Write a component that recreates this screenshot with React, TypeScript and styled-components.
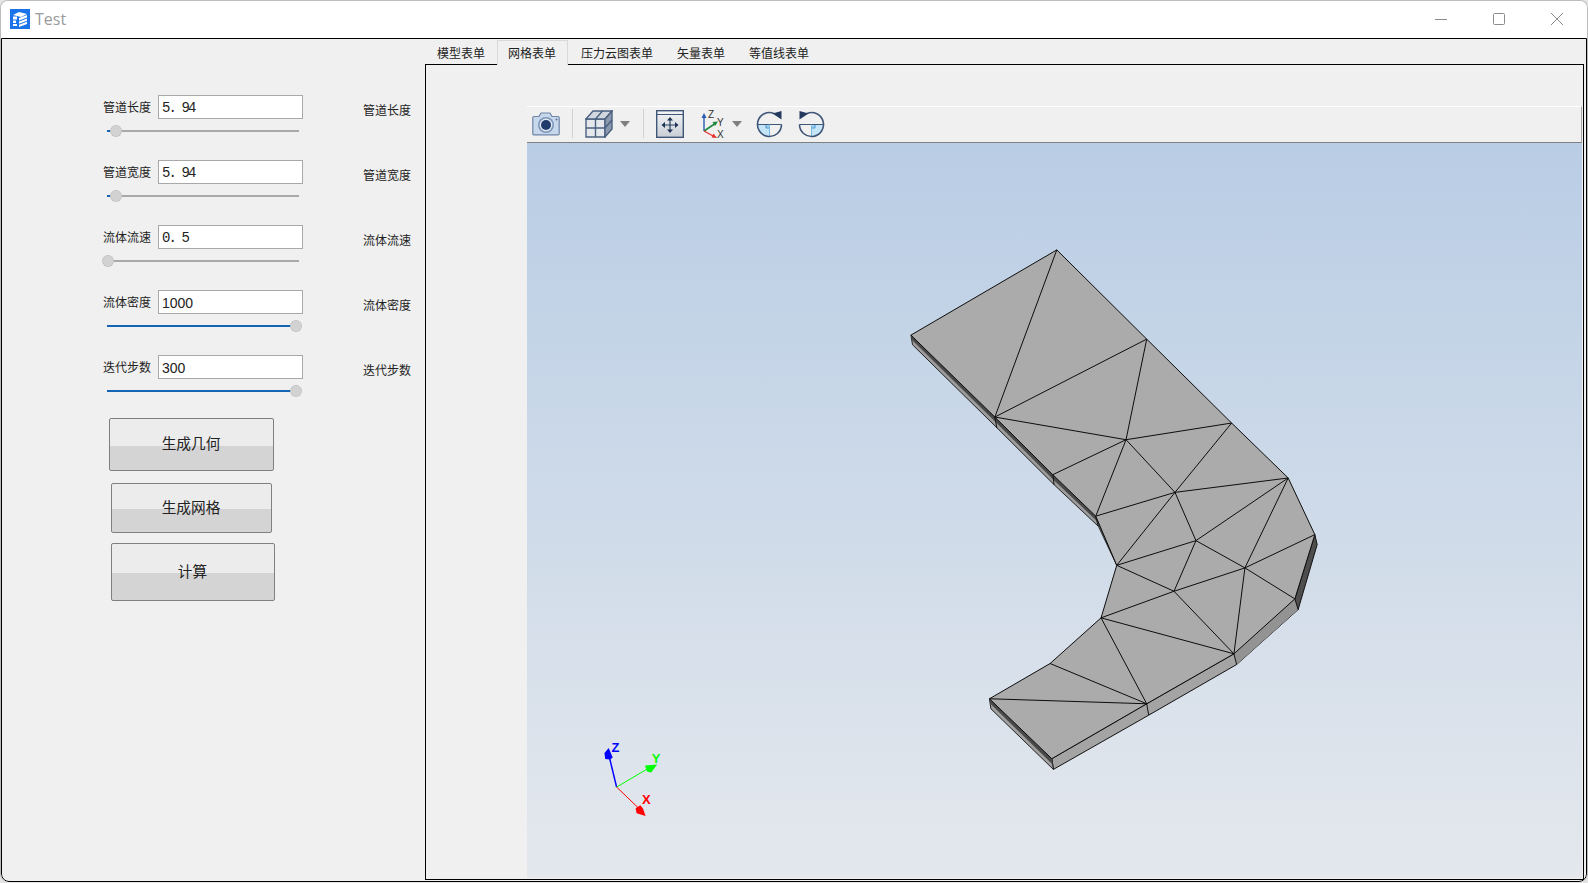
import React from 'react';
import styled, { createGlobalStyle } from 'styled-components';

const GlobalStyle = createGlobalStyle`
  html, body {
    margin: 0;
    height: 100%;
    background: #e4e4e4;
    overflow: hidden;
  }
  body {
    font-family: "Noto Sans CJK SC", "Liberation Sans", sans-serif;
  }
`;

const Frame = styled.div`
  box-sizing: border-box;
  width: 1588px;
  height: 882px;
  display: flex;
  flex-direction: column;
  background: #fff;
  border: 1px solid #bdbdbd;
  border-bottom: none;
  border-radius: 8px;
  overflow: hidden;
`;

const TitleBar = styled.header`
  flex: 0 0 37px;
  box-sizing: border-box;
  display: flex;
  align-items: center;
  padding: 0 0 2px 9px;
  background: #fff;
`;

const WindowTitle = styled.span`
  margin-left: 5px;
  font-family: "Open Sans", "Liberation Sans", sans-serif;
  font-size: 16px;
  color: #9b9b9b;
`;

const WindowControls = styled.div`
  margin-left: auto;
  display: flex;
  align-items: center;
`;

const ControlGlyph = styled.svg<{ $mr: number }>`
  display: block;
  width: 14px;
  height: 14px;
  margin-right: ${p => p.$mr}px;
  fill: none;
  stroke: #8c8c8c;
  stroke-width: 1;
`;

const Client = styled.div`
  flex: 1;
  min-height: 0;
  display: flex;
  background: #f0f0f0;
  border: 1px solid #000;
  border-radius: 0 0 8px 8px;
  padding: 0 1px 1px 0;
`;

const SidePanel = styled.aside`
  flex: 0 0 423px;
  display: flex;
  flex-direction: column;
  gap: 23px;
  padding-top: 56px;
  box-sizing: border-box;
`;

const ParamRow = styled.div`
  display: grid;
  grid-template-columns: 48px 145px 48px;
  grid-template-rows: 24px 12px;
  column-gap: 7px;
  row-gap: 6px;
  padding-left: 101px;
  align-items: center;
`;

const ParamLabel = styled.label`
  font-size: 12px;
  line-height: 16px;
  color: #222;
  white-space: nowrap;
`;

const EchoLabel = styled(ParamLabel)`
  margin-left: 53px;
  margin-top: 6px;
`;

const ParamInput = styled.input<{ $mono?: boolean }>`
  box-sizing: border-box;
  width: 145px;
  height: 24px;
  padding: 2px 3px 0;
  background: #fff;
  border: 1px solid #a9a9a9;
  border-radius: 0;
  outline: none;
  color: #222;
  font-family: ${p => (p.$mono ? '"Liberation Mono", monospace' : '"Liberation Sans", sans-serif')};
  font-size: 14px;
  letter-spacing: ${p => (p.$mono ? '-1.9px' : '0')};
`;

const SliderTrack = styled.div`
  grid-column: 1 / 3;
  position: relative;
  margin-left: 4px;
  width: 192px;
  height: 2px;
  background: #a9a9a9;
`;

const SliderFill = styled.div`
  position: absolute;
  left: 0;
  top: 0;
  height: 2px;
  background: #1565b5;
`;

const SliderThumb = styled.div`
  position: absolute;
  top: -5px;
  box-sizing: border-box;
  width: 12px;
  height: 12px;
  margin-left: -6px;
  background: #d2d2d2;
  border: 1px dotted #b8b8b8;
  border-radius: 50%;
`;

const ActionButton = styled.button<{ $w: number; $h: number; $ml: number; $mt: number; $split: number }>`
  display: block;
  box-sizing: border-box;
  width: ${p => p.$w}px;
  height: ${p => p.$h}px;
  margin: ${p => p.$mt}px 0 0 ${p => p.$ml}px;
  padding: 0 1px 4px 0;
  border: 1px solid #808080;
  border-radius: 2px;
  background: linear-gradient(#ececec 0, #ececec ${p => p.$split}px, #d4d4d4 ${p => p.$split}px, #d4d4d4 100%);
  font-family: "Noto Sans CJK SC", sans-serif;
  font-size: 14.67px;
  color: #222;
`;

const ButtonGroup = styled.div`
  margin-top: -2px;
`;

const MainColumn = styled.section`
  flex: 1;
  min-width: 0;
  display: flex;
  flex-direction: column;
  padding-top: 1px;
`;

const TabBar = styled.nav`
  flex: 0 0 24px;
  height: 24px;
  min-height: 0;
  display: flex;
  align-items: flex-start;
  position: relative;
  z-index: 1;
`;

const Tab = styled.div<{ $active?: boolean }>`
  box-sizing: border-box;
  height: ${p => (p.$active ? '25px' : '24px')};
  padding: 0 12px;
  font-size: 12px;
  line-height: 25px;
  color: #222;
  white-space: nowrap;
  background: #f0f0f0;
  ${p =>
    p.$active &&
    `
    padding: 0 11px 0 10px;
    margin-right: 1px;
    border: 1px solid #d9d9d9;
    border-bottom: none;
    line-height: 24px;
  `}
`;

const TabPane = styled.div`
  flex: 1;
  min-height: 0;
  display: flex;
  flex-direction: column;
  box-sizing: border-box;
  border: 1px solid #000;
  margin-right: 1px;
  padding: 41px 1px 1px 101px;
`;

const Toolbar = styled.div`
  flex: none;
  display: flex;
  align-items: center;
  padding: 0 0 2px 5px;
  background: #f0f0f0;
  border-top: 1px solid #fff;
  border-right: 1px solid #a8a8a8;
  border-bottom: 1px solid #808080;
  height: 33px;
`;

const ToolGlyph = styled.svg<{ $ml?: number }>`
  display: block;
  flex: none;
  margin-left: ${p => p.$ml ?? 0}px;
`;

const ToolSeparator = styled.span<{ $ml: number }>`
  flex: none;
  width: 1px;
  height: 29px;
  margin-left: ${p => p.$ml}px;
  background: #d2d2d2;
`;

const DropCaret = styled.span`
  flex: none;
  width: 0;
  height: 0;
  margin-left: 7px;
  border-left: 5.5px solid transparent;
  border-right: 5.5px solid transparent;
  border-top: 6px solid #808080;
`;

const Viewport = styled.div`
  flex: 1;
  min-height: 0;
  background: linear-gradient(#b9cde5, #e4e8ed);
`;

const Scene = styled.svg`
  display: block;
  width: 100%;
  height: 100%;
`;

const AxisLabel = styled.text`
  font-family: "Liberation Sans", sans-serif;
  font-size: 13px;
  font-weight: 700;
`;

const AppLogo = () => (
  <svg width="20" height="20" viewBox="0 0 20 20">
    <rect width="20" height="20" fill="#1a73e8" />
    <path d="M3 6l6-3 8 2-6 3z" fill="#fff" />
    <path d="M3 7.5h4v3H3zM3 11.5h3v2.5H3zM3 15h4v2H3z" fill="#fff" />
    <path d="M9 9l8-3v2.4L9 11.4zM9 12.4l8-3v2.4l-8 3zM9 15.8l8-3V15l-8 3z" fill="#fff" />
  </svg>
);

const CameraIcon = () => (
  <ToolGlyph width="28" height="24" viewBox="0 0 28 24">
    <path
      d="M2 4.5h5l2-3.500h9l2 3.500h6a1.200 1.200 0 0 1 1.200 1.200v16a1.200 1.200 0 0 1-1.200 1.200H2a1.200 1.200 0 0 1-1.200-1.200v-16A1.200 1.200 0 0 1 2 4.500z"
      fill="#c7d8ec"
      stroke="#6e85a8"
      strokeWidth="1.2"
    />
    <circle cx="14" cy="13" r="8" fill="#7d95b8" />
    <circle cx="14" cy="13" r="6.400" fill="#dfe8f2" />
    <circle cx="14" cy="13" r="5" fill="#1f3a6b" />
    <circle cx="24.500" cy="7.500" r="1" fill="#5a7296" />
  </ToolGlyph>
);

const CubeIcon = () => (
  <ToolGlyph $ml={12} width="28" height="28" viewBox="0 0 28 28" fill="none" stroke="#4a607f" strokeWidth="1.4">
    <path d="M1 9h19v18H1z" fill="#e4e7ec" />
    <path d="M1 9l7-8h19l-7 8z" fill="#d2d7df" />
    <path d="M20 9l7-8v18l-7 8z" fill="#8b99af" />
    <path d="M10.5 9v18M1 18h19M10.5 9l7-8M20 18l7-8" />
  </ToolGlyph>
);

const FitIcon = () => (
  <ToolGlyph $ml={12} width="28" height="28" viewBox="0 0 28 28">
    <defs>
      <linearGradient id="fitBg" x1="0" y1="0" x2="0" y2="1">
        <stop offset="0" stopColor="#f3f4f6" />
        <stop offset="1" stopColor="#c9ced6" />
      </linearGradient>
    </defs>
    <rect x="0.7" y="0.7" width="26.6" height="26.6" fill="url(#fitBg)" stroke="#3f5678" strokeWidth="1.4" />
    <path d="M1 4.5h26" stroke="#3f5678" strokeWidth="1" />
    <path d="M14 8v14M7 15h14" stroke="#2a3f60" strokeWidth="1.2" />
    <path d="M14 7l-3 3.5h6zM14 23l-3-3.5h6zM5.5 15l3.5-3v6zM22.5 15L19 12v6z" fill="#1f3354" />
  </ToolGlyph>
);

const TriadIcon = () => (
  <ToolGlyph $ml={17} width="24" height="30" viewBox="0 0 24 30">
    <path d="M3 22V7" stroke="#2a5bb0" strokeWidth="1.4" />
    <path d="M3 4L0.5 9h5z" fill="#2a5bb0" />
    <path d="M3 22l12-8" stroke="#1e8a3c" strokeWidth="1.6" />
    <path d="M17 12.5l-5.5 0.5 2.5 4z" fill="#1e8a3c" />
    <path d="M3 22l11 6" stroke="#e53030" strokeWidth="1.4" />
    <path d="M16 29l-5.5-.5 2-4z" fill="#e53030" />
    <text x="7" y="9" fontSize="10" fontFamily="Liberation Sans, sans-serif" fill="#333">Z</text>
    <text x="16" y="17" fontSize="10" fontFamily="Liberation Sans, sans-serif" fill="#333">Y</text>
    <text x="16" y="29" fontSize="10" fontFamily="Liberation Sans, sans-serif" fill="#333">X</text>
  </ToolGlyph>
);

// rotate glyph, the second one is the same drawing flipped
const RotateIcon = ({ flip, ml }: { flip?: boolean; ml: number }) => (
  <ToolGlyph $ml={ml} width="27" height="28" viewBox="0 0 27 28">
    <g transform={flip ? 'translate(27 0) scale(-1 1)' : undefined}>
      <path d="M1.5 14.5A12 12 0 0 0 13.5 26.500V14.500z" fill="#c4e4f8" />
      <path d="M13.5 14.5h-3.500v3.500h3.500z" fill="#a3d3f2" stroke="#4f9ad0" strokeWidth="1" />
      <path d="M1.5 14.5h24" stroke="#3f5678" strokeWidth="1.2" />
      <path d="M13.500 14.500v12" stroke="#7db9e0" strokeWidth="1" />
      <path d="M25.500 14.500A12 12 0 1 1 18 3.400" fill="none" stroke="#3f5678" strokeWidth="1.6" />
      <path d="M16.500 3.500L25.500 1v8.500z" fill="#24395e" />
    </g>
  </ToolGlyph>
);

// mesh vertices, in page pixels (the scene viewBox starts at the viewport corner)
const V = {
  A: [1056.7, 250], B: [910.7, 335.3], C: [1146.7, 339.3], D: [994.7, 417.3],
  E: [1231.7, 423.3], F: [1126, 440], G: [1052.7, 475], H: [1288.3, 478.3],
  I: [1175, 492.7], J: [1095.7, 516.5], K: [1196, 541], L: [1315, 535],
  M: [1116.7, 565.7], N: [1245, 568.3], O: [1174, 591.7], P: [1295, 599.3],
  Q: [1101, 618.3], R: [1234, 654.3], S: [1050, 664], T: [1146.7, 704.3],
  U: [989.3, 699.3], W: [1051.7, 759.3],
} as const;

type VertexName = keyof typeof V;

const outline: VertexName[] = ['A', 'C', 'E', 'H', 'L', 'P', 'R', 'T', 'W', 'U', 'S', 'Q', 'M', 'J', 'G', 'D', 'B'];

const edges = [
  'AD', 'DC', 'CF', 'DF', 'FE', 'FG', 'FJ', 'FI', 'EI', 'IH', 'IJ', 'IK', 'IM', 'KH', 'HN',
  'LN', 'KM', 'KO', 'KN', 'MO', 'ON', 'NP', 'NR', 'OR', 'OQ', 'QR', 'QT', 'ST', 'UT',
];

const pts = (names: VertexName[]) => names.map(n => V[n].join(',')).join(' ');

const MeshModel = () => (
  <g strokeLinejoin="round" transform="translate(0.6 0)">
    {/* thin side walls seen below the top face */}
    <polygon points="1051.7,759.3 1146.7,704.3 1234,654.3 1295,599.3 1298.3,610 1236.7,665 1148.7,715.7 1053.3,770" fill="#a4a4a4" stroke="#111" strokeWidth="1" />
    <polygon points="1234,654.3 1295,599.3 1298.3,610 1236.7,665" fill="#939393" />
    <polygon points="1315,535 1317.3,545 1298.3,610 1295,599.3" fill="#4e4e4e" stroke="#111" strokeWidth="1" />
    <polygon points="989.3,699.3 990.7,709.3 1053.3,770 1051.7,759.3" fill="#a0a0a0" stroke="#222" strokeWidth="1" />
    <polygon points="989.3,699.3 990,704 1052.5,765 1051.7,759.3" fill="#484848" />
    <polygon points="910.7,335.3 912.3,345 996.7,428 1054,485 1098.3,526.7 1095.7,516.5 1052.7,475 994.7,417.3" fill="#9c9c9c" stroke="#222" strokeWidth="1" />
    <polygon points="910.7,335.3 911.500,340 995.700,422.500 1053.300,480 1097,521.500 1095.700,516.500 1052.700,475 994.700,417.300" fill="#484848" />
    <polygon points="1095.7,516.5 1098.3,526.7 1116.7,565.7" fill="#707070" stroke="#111" strokeWidth="0.8" />
    <path d="M1146.7 704.3l2 11.4M1234 654.3l2.7 10.7M994.7 417.3l2 11M1052.7 475l1.3 10" stroke="#111" strokeWidth="1" fill="none" />
    <polygon points={pts(outline)} fill="#ababab" stroke="#0c0c0c" strokeWidth="1" />
    {edges.map(e => {
      const [a, b] = [V[e[0] as VertexName], V[e[1] as VertexName]];
      return <line key={e} x1={a[0]} y1={a[1]} x2={b[0]} y2={b[1]} stroke="#0c0c0c" strokeWidth="1" />;
    })}
  </g>
);

const CornerTriad = () => (
  <g>
    <line x1="616.7" y1="787.7" x2="609" y2="756" stroke="#0000ff" strokeWidth="1.5" />
    <path d="M608.8 748.5l4 9.5-2.5 2.2-5-.7-.8-6z" fill="#0000ff" />
    <line x1="616.7" y1="787.7" x2="650" y2="768" stroke="#00ff00" strokeWidth="1" />
    <path d="M657.3 765l-6 8-4.2-1-2-5.8z" fill="#00ff00" />
    <line x1="616.7" y1="787.7" x2="640" y2="810" stroke="#ff0000" strokeWidth="1" />
    <path d="M645.7 816.7l-9-2.7-1-5 4.800-3.200 2.700 3.700z" fill="#ff0000" />
    <AxisLabel x="611.500" y="753" fill="#0000ff">Z</AxisLabel>
    <AxisLabel x="652" y="764" fill="#00ff00">Y</AxisLabel>
    <AxisLabel x="642" y="805" fill="#ff0000">X</AxisLabel>
  </g>
);

interface Param {
  label: string;
  value: string;
  mono?: boolean;
  thumb: number; // thumb centre along the 192px track
}

const params: Param[] = [
  { label: '管道长度', value: '5. 94', mono: true, thumb: 9 },
  { label: '管道宽度', value: '5. 94', mono: true, thumb: 9 },
  { label: '流体流速', value: '0. 5', mono: true, thumb: 1 },
  { label: '流体密度', value: '1000', thumb: 189 },
  { label: '迭代步数', value: '300', thumb: 189 },
];

const tabs = ['模型表单', '网格表单', '压力云图表单', '矢量表单', '等值线表单'];

export default function App() {
  return (
    <>
      <GlobalStyle />
      <Frame>
        <TitleBar>
          <AppLogo />
          <WindowTitle>Test</WindowTitle>
          <WindowControls>
            <ControlGlyph $mr={44} viewBox="0 0 14 14">
              <path d="M1 7.500h12" />
            </ControlGlyph>
            <ControlGlyph $mr={44} viewBox="0 0 14 14">
              <rect x="1.500" y="1.500" width="11" height="11" rx="1" />
            </ControlGlyph>
            <ControlGlyph $mr={23} viewBox="0 0 14 14">
              <path d="M1 1l12 12M13 1L1 13" />
            </ControlGlyph>
          </WindowControls>
        </TitleBar>
        <Client>
          <SidePanel>
            {params.map((p, i) => (
              <ParamRow key={i}>
                <ParamLabel>{p.label}</ParamLabel>
                <ParamInput $mono={p.mono} defaultValue={p.value} />
                <EchoLabel>{p.label}</EchoLabel>
                <SliderTrack>
                  <SliderFill style={{ width: p.thumb }} />
                  <SliderThumb style={{ left: p.thumb }} />
                </SliderTrack>
              </ParamRow>
            ))}
            <ButtonGroup>
              <ActionButton $w={165} $h={53} $ml={107} $mt={0} $split={27}>生成几何</ActionButton>
              <ActionButton $w={161} $h={50} $ml={109} $mt={12} $split={25}>生成网格</ActionButton>
              <ActionButton $w={164} $h={58} $ml={109} $mt={10} $split={29}>计算</ActionButton>
            </ButtonGroup>
          </SidePanel>
          <MainColumn>
            <TabBar>
              {tabs.map((t, i) => (
                <Tab key={t} $active={i === 1}>{t}</Tab>
              ))}
            </TabBar>
            <TabPane>
              <Toolbar>
                <CameraIcon />
                <ToolSeparator $ml={12} />
                <CubeIcon />
                <DropCaret />
                <ToolSeparator $ml={13} />
                <FitIcon />
                <TriadIcon />
                <DropCaret />
                <RotateIcon ml={14} />
                <RotateIcon flip ml={15} />
              </Toolbar>
              <Viewport>
                <Scene viewBox="527 143 1056 736" preserveAspectRatio="xMinYMin slice">
                  <MeshModel />
                  <CornerTriad />
                </Scene>
              </Viewport>
            </TabPane>
          </MainColumn>
        </Client>
      </Frame>
    </>
  );
}
